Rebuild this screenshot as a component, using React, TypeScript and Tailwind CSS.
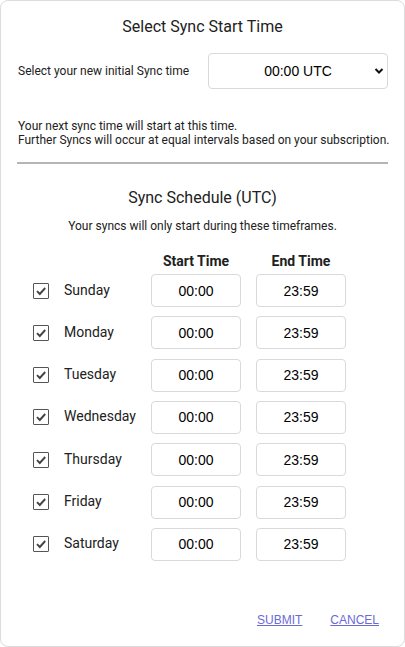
import React, { useState } from 'react';

const days = ['Sunday', 'Monday', 'Tuesday', 'Wednesday', 'Thursday', 'Friday', 'Saturday'];

function CheckBox({ checked, onChange }: { checked: boolean; onChange: () => void }) {
  return (
    <button
      type="button"
      onClick={onChange}
      className="w-4 h-4 border border-[#555] rounded-[1px] bg-white flex items-center justify-center shrink-0"
    >
      {checked && (
        <svg width="12" height="12" viewBox="0 0 12 12">
          <path d="M2 6.2 L4.8 9 L10.2 3" fill="none" stroke="#444" strokeWidth="1.9" />
        </svg>
      )}
    </button>
  );
}

function App() {
  const [checked, setChecked] = useState<boolean[]>(days.map(() => true));

  return (
    <div className="h-[647px] w-[405px] bg-white font-['Roboto',sans-serif] text-[#212121]">
      <div className="h-full border border-[#dcdcdc] rounded-lg flex flex-col px-4">
        <h1 className="text-[16px] leading-5 text-center mt-[16px]">Select Sync Start Time</h1>

        <div className="flex items-center justify-between mt-4">
          <span className="text-[12px] pl-px">Select your new initial Sync time</span>
          <div className="relative w-[180px] h-9">
            <select className="appearance-none w-full h-full border border-[#d9d9d9] rounded-[4px] bg-white text-center text-[14px] font-['Liberation_Sans',sans-serif] text-black outline-none">
              <option>00:00 UTC</option>
            </select>
            <svg className="absolute right-[4px] top-[14px]" width="10" height="8" viewBox="0 0 10 8">
              <path d="M1.5 2 L5 5.5 L8.5 2" fill="none" stroke="#111" strokeWidth="2" />
            </svg>
          </div>
        </div>

        <p className="text-[12px] leading-[14px] mt-[30px] pl-px whitespace-nowrap">
          Your next sync time will start at this time.
          <br />
          Further Syncs will occur at equal intervals based on your subscription.
        </p>

        <hr className="border-0 h-[2px] bg-[#b5b5b5] mt-[15px]" />

        <h2 className="text-[16px] leading-5 text-center mt-[24px]">Sync Schedule (UTC)</h2>
        <p className="text-[12px] leading-[14px] text-center mt-[11px]">Your syncs will only start during these timeframes.</p>

        <div className="flex flex-col pl-[16px] mt-[20px]">
          <div className="flex h-4 items-center text-[14px] font-bold">
            <div className="w-[118px]" />
            <div className="w-[90px] text-center">Start Time</div>
            <div className="w-[15px]" />
            <div className="w-[90px] text-center">End Time</div>
          </div>
          <div className="flex flex-col gap-[9.33px] mt-[5px]">
            {days.map((d, i) => (
              <div key={d} className="flex items-center h-[33px]">
                <CheckBox
                  checked={checked[i]}
                  onChange={() => setChecked(checked.map((c, j) => (j === i ? !c : c)))}
                />
                <span className="text-[14px] ml-[15px] w-[87px] -mt-px">{d}</span>
                <input
                  defaultValue="00:00"
                  className="w-[90px] h-[33px] border border-[#d9d9d9] rounded-[4px] text-center text-[14px] font-['Liberation_Sans',sans-serif] text-black outline-none"
                />
                <input
                  defaultValue="23:59"
                  className="w-[90px] h-[33px] ml-[15px] border border-[#d9d9d9] rounded-[4px] text-center text-[14px] font-['Liberation_Sans',sans-serif] text-black outline-none"
                />
              </div>
            ))}
          </div>
        </div>

        <div className="flex justify-end gap-[28px] mt-auto mb-[17px] pr-[9px] font-['Liberation_Sans',sans-serif] text-[12px]">
          <button className="underline text-[#6b6bd6]">SUBMIT</button>
          <button className="underline text-[#6b6bd6]">CANCEL</button>
        </div>
      </div>
    </div>
  );
}

export default App;
